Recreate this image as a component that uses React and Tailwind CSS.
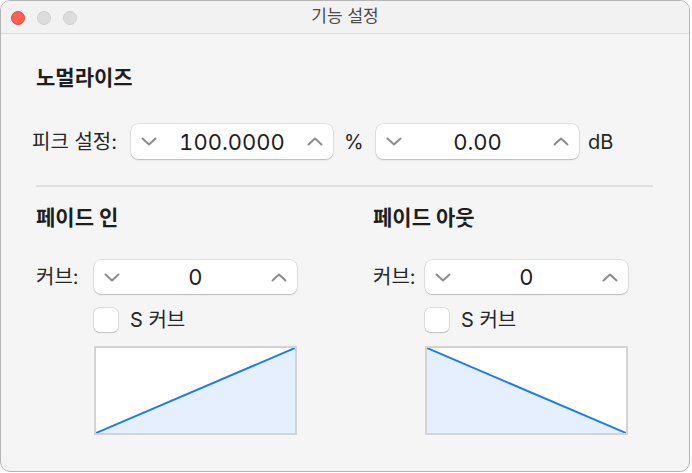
import React from 'react';

const font = { fontFamily: 'Inter, "Noto Sans CJK KR", sans-serif' };

const ChevronDown = () => (
    <svg width="16" height="9" viewBox="0 0 16 9" fill="none">
        <path d="M1.5 1.5 L8 7.5 L14.5 1.5" stroke="#8c8c8c" strokeWidth="2" strokeLinecap="round" strokeLinejoin="round" />
    </svg>
);

const ChevronUp = () => (
    <svg width="16" height="9" viewBox="0 0 16 9" fill="none">
        <path d="M1.5 7.5 L8 1.5 L14.5 7.5" stroke="#8c8c8c" strokeWidth="2" strokeLinecap="round" strokeLinejoin="round" />
    </svg>
);

// Number field with step arrows on both sides
const Stepper = ({ value, width = 'w-[203px]', height = 'h-[35px]' }) => (
    <div className={`${width} ${height} shrink-0 bg-white rounded-[7px] shadow-[0_0_0_0.5px_rgba(0,0,0,0.14),0_1px_1.5px_rgba(0,0,0,0.18)] flex items-center justify-between px-[10px]`}>
        <ChevronDown />
        <span className="text-[22px] text-[#1e1e1e] leading-none tabular-nums">{value}</span>
        <ChevronUp />
    </div>
);

const CurveGraph = ({ direction }) => {
    const fill = direction === 'in' ? '0,89 203,0 203,89' : '0,0 0,89 203,89';
    const line = direction === 'in' ? { x1: 0, y1: 89, x2: 203, y2: 0 } : { x1: 0, y1: 0, x2: 203, y2: 89 };
    return (
        <div className="w-[203px] h-[89px] border-2 border-[#d3d3d3] bg-white">
            <svg width="100%" height="100%" viewBox="0 0 203 89" preserveAspectRatio="none">
                <polygon points={fill} fill="#e6effd" />
                <line {...line} stroke="#1a7af4" strokeWidth="2" />
            </svg>
        </div>
    );
};

const FadeSection = ({ title, direction, labelWidth, indent }) => (
    <div className="flex flex-col">
        <h3 className="text-[21px] font-bold leading-6 text-[#1e1e1e] mt-[19px]">{title}</h3>
        <div className="flex items-center mt-[30px]">
            <span className={`${labelWidth} text-[20px] leading-6 text-[#262626]`}>커브:</span>
            <Stepper value="0" height="h-[34px]" />
        </div>
        <div className={`flex items-center gap-[12px] mt-[14px] ${indent}`}>
            <div className="w-[24px] h-[24px] bg-white rounded-[5px] shadow-[0_0_0_0.5px_rgba(0,0,0,0.2),0_1px_1px_rgba(0,0,0,0.12)]" />
            <span className="text-[20px] leading-6 text-[#262626]">S 커브</span>
        </div>
        <div className={`mt-[14px] ${indent}`}>
            <CurveGraph direction={direction} />
        </div>
    </div>
);

export default function App() {
    return (
        <div className="w-[692px] h-[473px] bg-white" style={font}>
            <div className="w-[690px] h-[472px] border border-[#b5b5b5] rounded-[10px] overflow-hidden bg-[#f5f5f5] flex flex-col">
                {/* title bar */}
                <div className="h-[33px] shrink-0 bg-[#f2f2f2] border-b border-[#dcdcdc] flex items-center relative">
                    <div className="flex items-center gap-[12px] pl-[10px] pt-[2px]">
                        <span className="w-[14px] h-[14px] rounded-full bg-[#fe5f57] border border-[#e2463f]" />
                        <span className="w-[14px] h-[14px] rounded-full bg-[#dcdcdc] border border-[#cfcfcf]" />
                        <span className="w-[14px] h-[14px] rounded-full bg-[#dcdcdc] border border-[#cfcfcf]" />
                    </div>
                    <span className="absolute inset-x-0 text-center text-[17px] text-[#4a4a4a]">기능 설정</span>
                </div>

                <div className="pl-[35px] pr-[36px]">
                    <h2 className="text-[21px] font-bold leading-6 text-[#1e1e1e] mt-[32px]">노멀라이즈</h2>
                    <div className="flex items-center mt-[34px] -ml-[4px]">
                        <span className="w-[99px] shrink-0 text-[20px] leading-6 text-[#262626]">피크 설정:</span>
                        <Stepper value="100.0000" width="w-[202px]" />
                        <span className="w-[43px] shrink-0 pl-[11px] text-[20px] leading-6 text-[#262626]">%</span>
                        <Stepper value="0.00" />
                        <span className="ml-[9px] text-[20px] leading-6 text-[#262626]">dB</span>
                    </div>
                    <div className="h-[2px] bg-[#e0e0e0] mt-[26px]" />
                    <div className="grid grid-cols-[337px_1fr]">
                        <FadeSection title="페이드 인" direction="in" labelWidth="w-[58px]" indent="ml-[58px]" />
                        <FadeSection title="페이드 아웃" direction="out" labelWidth="w-[52px]" indent="ml-[52px]" />
                    </div>
                </div>
            </div>
        </div>
    );
}
